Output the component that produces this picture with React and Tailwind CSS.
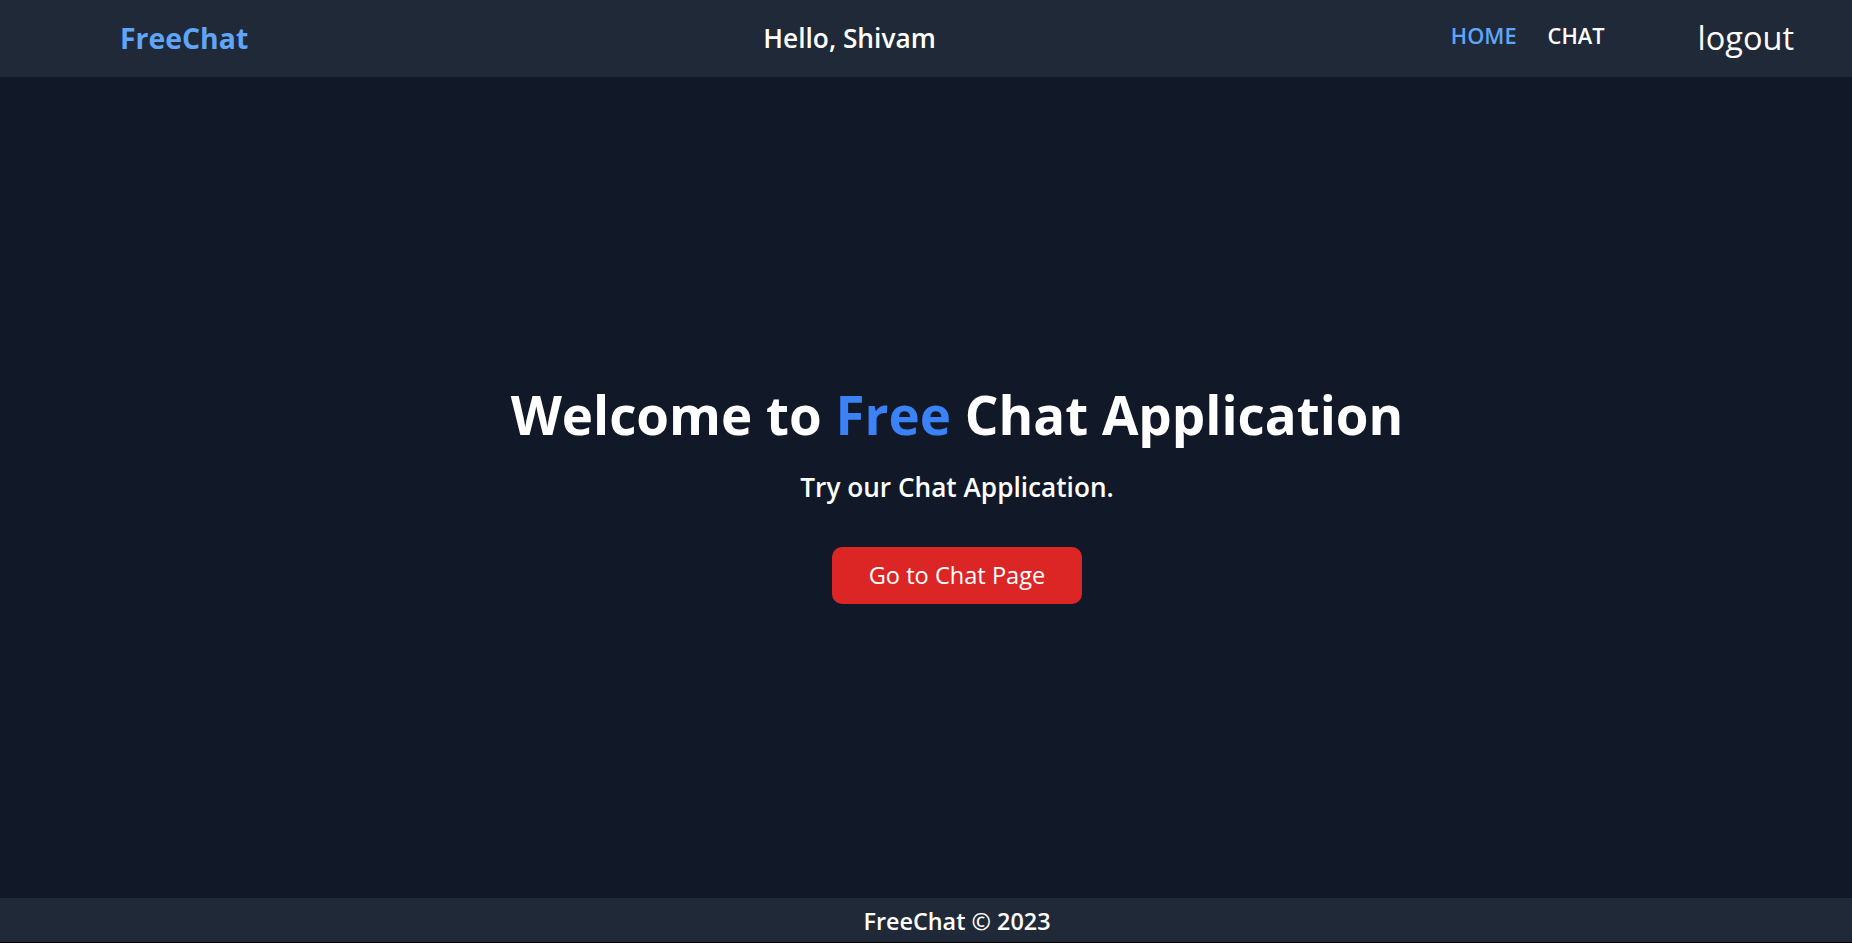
import React from 'react';

const Navbar = ({ user }) => {
  return (
    <nav className="h-[77px] bg-[#1f2937] flex items-center justify-between pl-[120px] pr-[58px]">
      <a href="#" className="text-[28.4px] font-bold text-[#60a5fa] leading-none">
        FreeChat
      </a>
      <div className="text-[26.3px] font-semibold text-white leading-none">Hello, {user}</div>
      <div className="flex items-center gap-[93px]">
        <ul className="flex items-center gap-[31px] text-[21.8px] font-semibold leading-none -mt-[6px]">
          <li className="text-[#60a5fa]">HOME</li>
          <li className="text-white">CHAT</li>
        </ul>
        <button className="text-[32.5px] text-white leading-none">logout</button>
      </div>
    </nav>
  );
};

export default function App() {
  return (
    <div className="min-h-screen flex flex-col bg-[#111827] font-['Open_Sans',sans-serif]">
      <Navbar user="Shivam" />

      <main className="flex-1 flex flex-col items-center justify-center pt-[10px] pl-[62px]">
        <h1 className="text-[52.9px] font-bold text-white leading-tight">
          Welcome to <span className="text-[#3b82f6]">Free</span> Chat Application
        </h1>
        <p className="mt-[21px] text-[26.2px] font-semibold text-white">Try our Chat Application.</p>
        <button className="mt-[39px] h-[57px] px-[37px] rounded-[10px] bg-[#dc2626] text-white text-[23.6px]">
          Go to Chat Page
        </button>
      </main>

      <footer className="h-[45px] bg-[#1f2937] flex items-center justify-center pl-[62px] pt-[3px] border-b border-black">
        <p className="text-[23.4px] font-semibold text-white">FreeChat © 2023</p>
      </footer>
    </div>
  );
}
